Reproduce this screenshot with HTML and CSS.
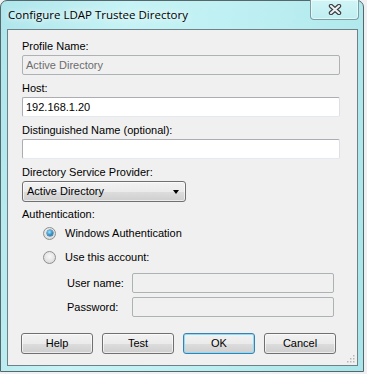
FILE: index.html
```html
<!DOCTYPE html>
<html lang="en">
<head>
  <meta charset="UTF-8">
  <title>Configure LDAP Trustee Directory</title>
  <link rel="stylesheet" href="styles.css">
</head>
<body>

<div class="window">
  <div class="titlebar">
    <span class="title">Configure LDAP Trustee Directory</span>
    <div class="close">
      <svg width="14" height="11" viewBox="0 0 14 11">
        <path d="M3 2 L11 9 M11 2 L3 9" stroke="#3a3d40" stroke-width="4.4" stroke-linecap="round"/>
        <path d="M3 2 L11 9 M11 2 L3 9" stroke="#eef0f2" stroke-width="2.2" stroke-linecap="round"/>
      </svg>
    </div>
  </div>

  <div class="client">
    <div class="group">
      <div class="lbl">Profile Name:</div>
      <div class="textbox disabled">Active Directory</div>
    </div>
    <div class="group">
      <div class="lbl">Host:</div>
      <div class="textbox">192.168.1.20</div>
    </div>
    <div class="group">
      <div class="lbl">Distinguished Name (optional):</div>
      <div class="textbox"></div>
    </div>
    <div class="group">
      <div class="lbl">Directory Service Provider:</div>
      <div class="combo">Active Directory<span class="arrow"></span></div>
    </div>

    <div class="lbl auth-lbl">Authentication:</div>
    <div class="radio-row">
      <span class="radio checked"></span>Windows Authentication
    </div>
    <div class="radio-row">
      <span class="radio"></span>Use this account:
    </div>

    <div class="cred">
      <div class="cred-row">
        <span class="cred-lbl">User name:</span>
        <div class="textbox disabled small"></div>
      </div>
      <div class="cred-row">
        <span class="cred-lbl">Password:</span>
        <div class="textbox disabled small"></div>
      </div>
    </div>

    <div class="buttons">
      <div class="btn">Help</div>
      <div class="btn">Test</div>
      <div class="btn default">OK</div>
      <div class="btn">Cancel</div>
    </div>

    <svg class="grip" width="9" height="9" viewBox="0 0 9 9">
      <g fill="#b8b8b8">
        <rect x="7" y="1" width="1.5" height="1.5"/>
        <rect x="4" y="4" width="1.5" height="1.5"/>
        <rect x="7" y="4" width="1.5" height="1.5"/>
        <rect x="1" y="7" width="1.5" height="1.5"/>
        <rect x="4" y="7" width="1.5" height="1.5"/>
        <rect x="7" y="7" width="1.5" height="1.5"/>
      </g>
    </svg>
  </div>
</div>

</body>
</html>
```

FILE: styles.css
```css
body { margin: 0; background: #eef0f1; font-family: "Liberation Sans", Arial, sans-serif; font-size: 11px; color: #000; }

.window {
  width: 364px;
  height: 372px;
  border: 1px solid #56666b;
  border-radius: 7px 7px 0 0;
  background: linear-gradient(100deg, #aee6ec 0%, #c6f3f5 30%, #bdeff2 60%, #a9e5ea 100%);
  padding: 0 5px 5px 6px;
  box-sizing: border-box;
  display: flex;
  flex-direction: column;
}

/* title bar */
.titlebar { height: 28px; display: flex; align-items: flex-start; flex-shrink: 0; }
.title {
  font-family: "Open Sans", "Noto Sans", sans-serif;
  font-size: 11.5px;
  margin: 6px 0 0 1px;
  color: #000;
  text-shadow: 0 0 6px #fff, 0 0 10px #fff;
}
.close {
  margin-left: auto;
  margin-right: -1px;
  width: 47px;
  height: 19px;
  margin-top: -1px;
  border: 1px solid #7c9ea3;
  border-top: none;
  border-radius: 0 0 4px 4px;
  background: linear-gradient(#d0f4f6, #bfeef1);
  box-shadow: inset 0 0 0 1px rgba(255,255,255,0.5);
  display: flex;
  align-items: center;
  justify-content: center;
}

/* client area */
.client {
  position: relative;
  flex: 1;
  border: 1px solid #6e8186;
  background: #f0f0f0;
  padding: 10px 17px 0 14px;
}
.lbl { line-height: 13px; height: 13px; }
.group { height: 42px; }
.group .lbl { margin-bottom: 2px; }

.textbox {
  height: 20px;
  box-sizing: border-box;
  background: #fff;
  border: 1px solid;
  border-color: #abadb3 #dbdfe6 #e3e9ef #abadb3;
  border-radius: 2px;
  padding: 3px 0 0 3px;
  line-height: 13px;
}
.textbox.disabled { background: #f0f0f0; border-color: #adb2b5; color: #6d6d6d; }

.combo {
  position: relative;
  width: 164px;
  height: 21px;
  box-sizing: border-box;
  border: 1px solid #707070;
  border-radius: 3px;
  background: linear-gradient(#f2f2f2 0%, #ebebeb 50%, #dddddd 51%, #cfcfcf 100%);
  box-shadow: inset 0 0 0 1px rgba(255,255,255,0.6);
  padding: 3px 0 0 4px;
  line-height: 13px;
}
.arrow {
  position: absolute;
  right: 6px;
  top: 8px;
  border-left: 3.5px solid transparent;
  border-right: 3.5px solid transparent;
  border-top: 4px solid #000;
}

.radio-row { display: flex; align-items: center; height: 16px; margin-top: 4px; padding-left: 21px; }
.radio-row + .radio-row { margin-top: 8px; }
.radio {
  width: 13px;
  height: 13px;
  box-sizing: border-box;
  border-radius: 50%;
  border: 1px solid #8e8f8f;
  background: radial-gradient(circle at 50% 40%, #f8f8f8 0%, #e2e2e2 60%, #cdcdcd 100%);
  margin-right: 9px;
  position: relative;
}
.radio.checked::after {
  content: "";
  position: absolute;
  left: 2.5px;
  top: 2.5px;
  width: 6px;
  height: 6px;
  border-radius: 50%;
  background: radial-gradient(circle at 40% 35%, #a9e2fb 0%, #3c9fd6 45%, #13507f 100%);
  box-shadow: 0 0 0 0.5px #1b5f8e;
}

.cred { margin-top: 8px; padding-left: 45px; }
.cred-row { display: flex; align-items: center; height: 20px; }
.cred-row + .cred-row { margin-top: 4px; }
.cred-lbl { width: 65px; }
.textbox.small { width: 202px; }

.buttons { display: flex; gap: 9px; margin-top: 16px; margin-left: -1px; }
.btn {
  width: 72px;
  height: 21px;
  box-sizing: border-box;
  border: 1px solid #707070;
  border-radius: 3px;
  background: linear-gradient(#f2f2f2 0%, #ebebeb 50%, #dddddd 51%, #cfcfcf 100%);
  box-shadow: inset 0 0 0 1px rgba(255,255,255,0.6);
  text-align: center;
  line-height: 19px;
}
.btn.default { border-color: #3c7fb1; box-shadow: inset 0 0 0 1px #8fdcf7; }

.grip { position: absolute; right: 2px; bottom: 2px; }
```
